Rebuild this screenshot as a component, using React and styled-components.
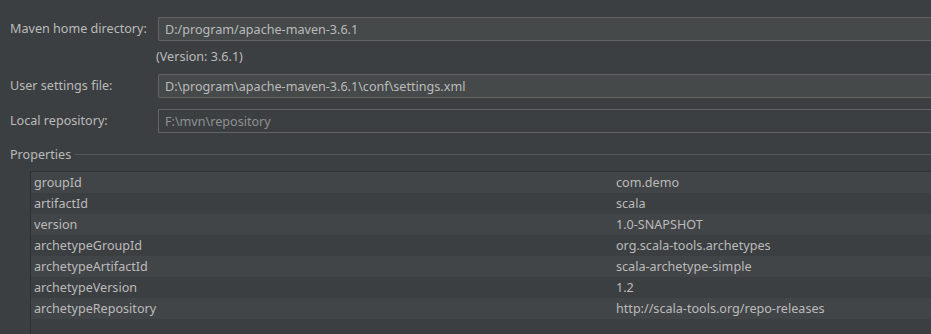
import React from "react";
import styled, { createGlobalStyle } from "styled-components";

const GlobalStyle = createGlobalStyle`
  html, body {
    margin: 0;
    padding: 0;
    background: #3c3f41;
    overflow: hidden;
  }
  body {
    font-family: "Noto Sans", "Open Sans", sans-serif;
    font-size: 12.6px;
    color: #bbbbbb;
  }
`;

const Page = styled.div`
  display: flex;
  flex-direction: column;
  height: 334px;
  padding-top: 16px;
  box-sizing: border-box;
  overflow: hidden;
`;

const FormRow = styled.div`
  display: grid;
  grid-template-columns: 158px 1fr;
  align-items: center;
  height: 24px;
  margin-bottom: ${(p) => p.gap || 0}px;
`;

const Label = styled.label`
  padding-left: 10px;
  line-height: 25px;
`;

const Field = styled.div`
  height: 24px;
  box-sizing: border-box;
  border: 1px solid #646464;
  border-right: none;
  border-radius: ${(p) => (p.disabled ? "0" : "2px 0 0 2px")};
  background: ${(p) => (p.disabled ? "#3c3f41" : "#45494a")};
  color: ${(p) => (p.disabled ? "#8e9192" : "#bbbbbb")};
  padding: 0 6px;
  line-height: 23px;
  white-space: nowrap;
  overflow: hidden;
`;

const Hint = styled.div`
  padding-left: 156px;
  height: 33px;
  line-height: 33px;
`;

const Section = styled.div`
  display: flex;
  align-items: center;
  gap: 4px;
  padding-left: 10px;
  margin-top: 14px;
  height: 18px;

  span {
    line-height: 18px;
  }
  &::after {
    content: "";
    flex: 1;
    height: 1px;
    margin-top: -2px;
    background: #55585a;
  }
`;

const Table = styled.div`
  flex: 1;
  margin: 7px 0 0 30px;
  border-top: 1px solid #2f3133;
  border-left: 1px solid #2f3133;
`;

const Row = styled.div`
  display: grid;
  grid-template-columns: 585px 1fr;
  height: 21px;
  line-height: 21px;
  background: ${(p) => (p.odd ? "#3c3f41" : "#424547")};
  white-space: nowrap;

  span:first-child {
    padding-left: 3px;
  }
`;

const fields = [
  { label: "Maven home directory:", value: "D:/program/apache-maven-3.6.1" },
  { label: "User settings file:", value: "D:\\program\\apache-maven-3.6.1\\conf\\settings.xml" },
  { label: "Local repository:", value: "F:\\mvn\\repository", disabled: true },
];

const props = [
  ["groupId", "com.demo"],
  ["artifactId", "scala"],
  ["version", "1.0-SNAPSHOT"],
  ["archetypeGroupId", "org.scala-tools.archetypes"],
  ["archetypeArtifactId", "scala-archetype-simple"],
  ["archetypeVersion", "1.2"],
  ["archetypeRepository", "http://scala-tools.org/repo-releases"],
];

export default function App() {
  return (
    <>
      <GlobalStyle />
      <Page>
        <FormRow>
          <Label>{fields[0].label}</Label>
          <Field>{fields[0].value}</Field>
        </FormRow>
        <Hint>(Version: 3.6.1)</Hint>
        <FormRow gap={11}>
          <Label>{fields[1].label}</Label>
          <Field>{fields[1].value}</Field>
        </FormRow>
        <FormRow>
          <Label>{fields[2].label}</Label>
          <Field disabled>{fields[2].value}</Field>
        </FormRow>
        <Section>
          <span>Properties</span>
        </Section>
        <Table>
          {props.map(([k, v], i) => (
            <Row key={k} odd={i % 2 === 1}>
              <span>{k}</span>
              <span>{v}</span>
            </Row>
          ))}
        </Table>
      </Page>
    </>
  );
}
